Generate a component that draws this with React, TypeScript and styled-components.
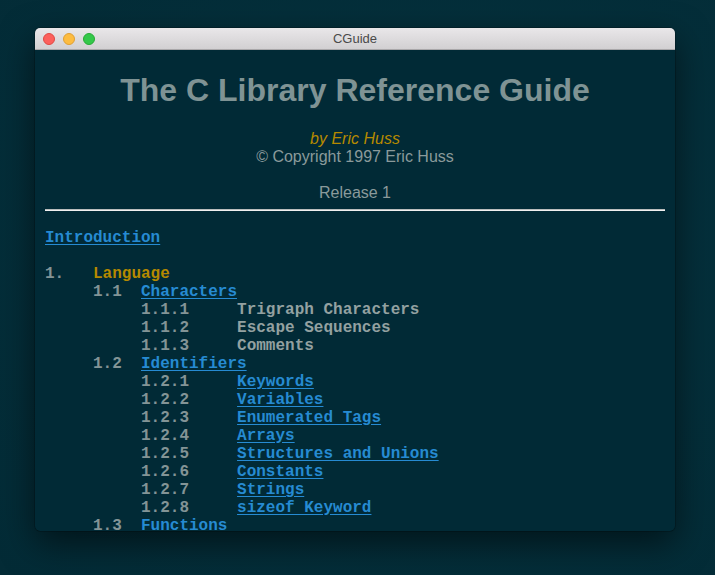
import React from "react";
import styled, { createGlobalStyle } from "styled-components";

const Global = createGlobalStyle`
  html, body { margin: 0; padding: 0; background: #04303b; height: 100%; }
  body { font-family: "Liberation Sans", Arial, sans-serif; }
  #root { height: 575px; overflow: hidden; }
`;

const Desk = styled.div`
  box-sizing: border-box;
  height: 575px;
  padding: 28px 40px 0 35px;
  background: radial-gradient(ellipse at 60% 40%, #05323e 0%, #032b36 100%);
`;

const Window = styled.div`
  width: 640px;
  height: 503px;
  border-radius: 5px;
  overflow: hidden;
  background: #012a36;
  box-shadow: 0 12px 34px rgba(0, 0, 0, 0.55), 0 0 0 0.5px rgba(0, 0, 0, 0.4);
  display: flex;
  flex-direction: column;
`;

const TitleBar = styled.div`
  position: relative;
  flex: 0 0 22px;
  height: 22px;
  box-sizing: border-box;
  background: linear-gradient(#e9e7e9, #d2d0d2);
  border-bottom: 1px solid #a9a7a9;
  display: flex;
  align-items: center;
  padding-left: 8px;
  gap: 8px;
`;

const Light = styled.span<{ $fill: string; $edge: string }>`
  width: 12px;
  height: 12px;
  box-sizing: border-box;
  border-radius: 50%;
  background: ${(p) => p.$fill};
  border: 0.5px solid ${(p) => p.$edge};
`;

const WinTitle = styled.div`
  position: absolute;
  left: 0;
  right: 0;
  top: 0;
  line-height: 21px;
  text-align: center;
  font-size: 13px;
  color: #4a4a4a;
  pointer-events: none;
`;

const Content = styled.div`
  flex: 1;
  overflow: hidden;
  padding: 20px 10px 0 10px;
`;

const Header = styled.div`
  text-align: center;
  color: #839496;
`;

const H1 = styled.h1`
  margin: 0;
  font-size: 32px;
  line-height: 40px;
  font-weight: bold;
  color: #7f9394;
`;

const Byline = styled.div`
  margin-top: 20px;
  font-size: 16px;
  line-height: 18px;
  font-style: italic;
  color: #b58900;
`;

const Line = styled.div<{ $gap?: number }>`
  margin-top: ${(p) => p.$gap ?? 0}px;
  font-size: 16px;
  line-height: 18px;
  color: #8a9a9b;
`;

const Rule = styled.hr`
  margin: 7px 0 18px 0;
  border: 0;
  border-top: 1px solid #b9bcbc;
  border-bottom: 1px solid #f0f0f0;
  height: 0;
`;

const Toc = styled.div`
  font-family: "Liberation Mono", "Courier New", monospace;
  font-size: 16px;
  line-height: 18px;
  font-weight: bold;
  white-space: pre;
`;

const Row = styled.div<{ $indent: number }>`
  display: flex;
  padding-left: ${(p) => p.$indent}ch;
  height: 18px;
`;

const Num = styled.span<{ $w: number }>`
  width: ${(p) => p.$w}ch;
  flex: 0 0 auto;
  color: #839496;
`;

const Link = styled.a`
  color: #268bd2;
  text-decoration: underline;
  text-underline-offset: 2px;
`;

const Heading = styled.span`
  color: #b58900;
`;

const Plain = styled.span`
  color: #93a1a1;
`;

const Blank = styled.div`
  height: 18px;
`;

type Item = { level: 1 | 2; num: string; text: string; link: boolean };

const items: Item[] = [
  { level: 1, num: "1.1", text: "Characters", link: true },
  { level: 2, num: "1.1.1", text: "Trigraph Characters", link: false },
  { level: 2, num: "1.1.2", text: "Escape Sequences", link: false },
  { level: 2, num: "1.1.3", text: "Comments", link: false },
  { level: 1, num: "1.2", text: "Identifiers", link: true },
  { level: 2, num: "1.2.1", text: "Keywords", link: true },
  { level: 2, num: "1.2.2", text: "Variables", link: true },
  { level: 2, num: "1.2.3", text: "Enumerated Tags", link: true },
  { level: 2, num: "1.2.4", text: "Arrays", link: true },
  { level: 2, num: "1.2.5", text: "Structures and Unions", link: true },
  { level: 2, num: "1.2.6", text: "Constants", link: true },
  { level: 2, num: "1.2.7", text: "Strings", link: true },
  { level: 2, num: "1.2.8", text: "sizeof Keyword", link: true },
  { level: 1, num: "1.3", text: "Functions", link: true },
];

export default function App() {
  return (
    <>
      <Global />
      <Desk>
        <Window>
          <TitleBar>
            <Light $fill="#fc605c" $edge="#de4943" />
            <Light $fill="#fdbc40" $edge="#de9f34" />
            <Light $fill="#34c84a" $edge="#27aa35" />
            <WinTitle>CGuide</WinTitle>
          </TitleBar>
          <Content>
            <Header>
              <H1>The C Library Reference Guide</H1>
              <Byline>by Eric Huss</Byline>
              <Line>© Copyright 1997 Eric Huss</Line>
              <Line $gap={18}>Release 1</Line>
            </Header>
            <Rule />
            <Toc>
              <Row $indent={0}>
                <Link href="#">Introduction</Link>
              </Row>
              <Blank />
              <Row $indent={0}>
                <Num $w={5}>1.</Num>
                <Heading>Language</Heading>
              </Row>
              {items.map((it) => (
                <Row key={it.num} $indent={it.level === 1 ? 5 : 10}>
                  <Num $w={it.level === 1 ? 5 : 10}>{it.num}</Num>
                  {it.link ? <Link href="#">{it.text}</Link> : <Plain>{it.text}</Plain>}
                </Row>
              ))}
            </Toc>
          </Content>
        </Window>
      </Desk>
    </>
  );
}
